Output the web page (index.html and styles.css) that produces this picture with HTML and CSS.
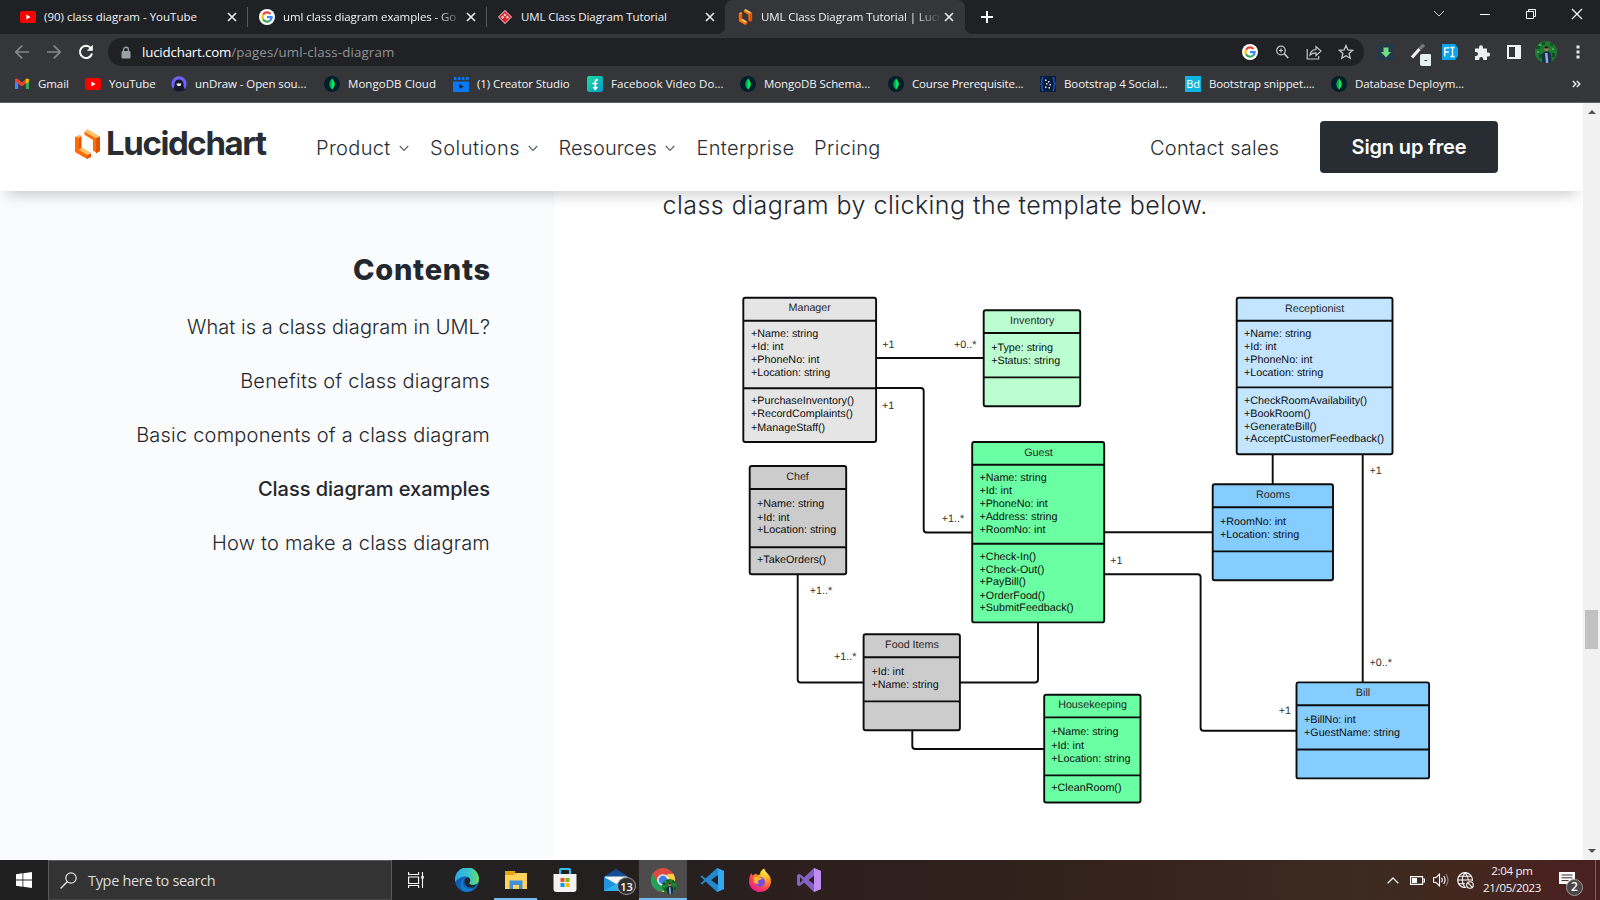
FILE: index.html
```html
<!DOCTYPE html>
<html lang="en">
<head>
<meta charset="utf-8">
<title>UML Class Diagram Tutorial | Lucidchart</title>
<link rel="stylesheet" href="styles.css">
</head>
<body>
<svg class="defs" width="0" height="0">
  <defs>
    <symbol id="x" viewBox="0 0 10 10"><path d="M1 1l8 8M9 1l-8 8" stroke="#e8eaed" stroke-width="1.7" fill="none"/></symbol>
    <symbol id="yt" viewBox="0 0 16 12"><rect width="16" height="12" rx="2.6" fill="#f00"/><path d="M6.3 3.6v4.8L10.6 6z" fill="#fff"/></symbol>
    <symbol id="google" viewBox="0 0 16 16"><circle cx="8" cy="8" r="8" fill="#fff"/><g fill="none" stroke-width="2.2"><path d="M4.1 5.6A4.6 4.6 0 0 1 11.4 4.9" stroke="#ea4335"/><path d="M4.1 5.6a4.6 4.6 0 0 0 0 4.8" stroke="#fbbc05"/><path d="M4.1 10.4a4.6 4.6 0 0 0 7 1.1" stroke="#34a853"/><path d="M11.1 11.5A4.4 4.4 0 0 0 12.6 8.2H8" stroke="#4285f4"/></g></symbol>
    <symbol id="mongo" viewBox="0 0 16 16"><circle cx="8" cy="8" r="8" fill="#021e2b"/><path d="M8 2.400c3.600 3.800 3.400 8 0 11-3.400-3-3.600-7.200 0-11z" fill="#10aa50"/><path d="M8 2.400c3.600 3.800 3.400 8 0 11z" fill="#00ed64"/></symbol>
    <symbol id="lucid" viewBox="0 0 25 30"><path d="M0 8l5.500-1.600v15L0 23z" fill="#ff6d00"/><path d="M4 8.500L6.500 7v13L4 21.500z" fill="#e65100"/><path d="M0 8l4-2 2.500 1L4 9z" fill="#ffb14d"/><path d="M0 23l4.500-3L15.500 26.500 12 30z" fill="#ff6d00"/><path d="M3.500 20.500L7 18.400l9 5.400-3.500 2.400z" fill="#ffc26b"/><path d="M12 30v-3.500l4-2.300V28z" fill="#e65100"/><path d="M9.500 2.500l3-2.500L25 7.500 20.500 9z" fill="#ffc26b"/><path d="M9.500 2.500L20.500 9v3.500L9.500 5.800z" fill="#ff6d00"/><path d="M18 10l3-1.500v15L18 21.500z" fill="#ff6d00"/><path d="M21 9l4-1.500V22l-4 2.500z" fill="#e65100"/></symbol>
    <symbol id="chev" viewBox="0 0 10 7"><path d="M.8 1L5 5.400 9.200 1" stroke="#5a636d" stroke-width="1.200" fill="none"/></symbol>
    <symbol id="face" viewBox="0 0 22 24"><clipPath id="fc"><circle cx="11" cy="12" r="11"/></clipPath><g clip-path="url(#fc)"><rect width="22" height="24" fill="#1d7a30"/><path d="M1 6h4v3H1zM15 3h3v3h-3zM4 14h3v4H4zM17 13h3v4h-3zM7 2h3v3H7z" fill="#0e5220"/><path d="M4 4h2v2H4zM17 8h2v2h-2zM2 11h2v2H2z" fill="#3da64a"/><circle cx="11.500" cy="9" r="2.300" fill="#a9785c"/><path d="M9.300 7.600q2.200-2.500 4.400 0l-.5.8h-3.400z" fill="#221a18"/><path d="M7 14l3-2.500h4l2 2.500.5 10h-9z" fill="#1b2a4a"/><path d="M10 13h2.500l1 11h-2.500z" fill="#8fb0dc"/></g></symbol>
  </defs>
</svg>

<div class="screen">
  <header class="browser">
    <div class="tabs">
      <div class="tab"><svg class="fav16x12"><use href="#yt"/></svg><span class="t1">(90) class diagram - YouTube</span><svg class="close"><use href="#x"/></svg></div>
      <div class="tab sep"><svg class="i16"><use href="#google"/></svg><span class="fade">uml class diagram examples - Go</span><svg class="close"><use href="#x"/></svg></div>
      <div class="tab sep"><svg class="i14" viewBox="0 0 14 14"><path d="M7 0l7 7-7 7-7-7z" fill="#f4dcdc"/><path d="M7 .9L13.100 7 7 13.100.9 7z" fill="#d8232a"/><path d="M7 3.200l1.700 1.700L7 6.600 5.300 4.900zM4.600 5.600l1.700 1.700-1.700 1.700-1.700-1.700zM9.400 5.600l1.700 1.700L9.400 9 7.700 7.300z" fill="#fff" opacity=".75"/></svg><span class="t3">UML Class Diagram Tutorial</span><svg class="close"><use href="#x"/></svg></div>
      <div class="tab active"><svg class="luc"><use href="#lucid"/></svg><span class="fade">UML Class Diagram Tutorial | Luci</span><svg class="close"><use href="#x"/></svg></div>
      <svg class="plus" viewBox="0 0 12 12"><path d="M6 0v12M0 6h12" stroke="#fff" stroke-width="2"/></svg>
      <div class="win">
        <svg viewBox="0 0 12 12"><path d="M1 3l5 5 5-5" stroke="#c8cacd" fill="none"/></svg>
        <svg viewBox="0 0 12 12"><path d="M1 6.500h10" stroke="#fff" fill="none"/></svg>
        <svg viewBox="0 0 12 12"><path d="M1.500 3.500h7v7h-7zM3.500 3.500v-2h7v7h-2" stroke="#fff" fill="none"/></svg>
        <svg viewBox="0 0 12 12"><path d="M1 1l10 10M11 1L1 11" stroke="#fff" stroke-width="1.200" fill="none"/></svg>
      </div>
    </div>
    <div class="toolbar">
      <div class="navbtns">
        <svg viewBox="0 0 16 16"><path d="M15 8H2M8.200 1.600L1.800 8l6.400 6.400" stroke="#85878a" stroke-width="1.700" fill="none"/></svg>
        <svg viewBox="0 0 16 16"><path d="M1 8h13M7.800 1.600L14.200 8l-6.400 6.400" stroke="#85878a" stroke-width="1.700" fill="none"/></svg>
        <svg viewBox="0 0 16 16"><path d="M12.800 4.100A6.100 6.100 0 1 0 14 9.400" stroke="#fff" stroke-width="2" fill="none"/><path d="M14.800.8v6H8.800z" fill="#fff"/></svg>
      </div>
      <div class="omni">
        <svg class="lock" viewBox="0 0 10 13"><rect x=".5" y="5" width="9" height="7.500" rx="1" fill="#9aa0a6"/><path d="M2.600 5.500V3.600a2.400 2.400 0 0 1 4.800 0v1.900" stroke="#9aa0a6" stroke-width="1.400" fill="none"/></svg>
        <span class="host">lucidchart.com</span><span class="path">/pages/uml-class-diagram</span>
        <div class="oicons">
          <svg viewBox="0 0 16 16"><use href="#google"/></svg>
          <svg viewBox="0 0 16 16" fill="none" stroke="#c4c7ca" stroke-width="1.200"><circle cx="7" cy="6.500" r="4.300"/><path d="M10.200 9.700l4 4.300" stroke-width="1.700"/><path d="M5 6.500h4M7 4.500v4"/></svg>
          <svg viewBox="0 0 16 16" fill="none" stroke="#c4c7ca" stroke-width="1.200"><path d="M1.200 5v10h11.500v-3"/><path d="M4 11c.4-3.600 2.400-5.300 6-5.500V2.500l5 4.600-5 4.500V8.800C7.500 8.800 5.600 9.400 4 11z"/></svg>
          <svg viewBox="0 0 16 16" fill="none" stroke="#c4c7ca" stroke-width="1.300"><path d="M8 1.500l1.900 4.400 4.800.4-3.600 3.200 1.100 4.700L8 11.700l-4.200 2.500 1.100-4.700-3.600-3.200 4.800-.4z"/></svg>
        </div>
      </div>
      <div class="ext">
        <svg class="e1" viewBox="0 0 16 16"><rect width="16" height="16" rx="1" fill="#22394a"/><path d="M5.500 3.500h5V8H13l-5 5.500L3 8h2.500z" fill="#6fdc7d"/></svg>
        <svg class="e2" viewBox="0 0 20 22"><path d="M1 13.500L8.500 5" stroke="#f1f1f1" stroke-width="3"/><path d="M8.500 5L13 .8" stroke="#777" stroke-width="3.500"/><rect x="9" y="10" width="11.500" height="12" rx="2" fill="#e4f0f2"/><path d="M13.500 16.500h2.500" stroke="#333"/></svg>
        <svg class="e3" viewBox="0 0 16 16"><path d="M0 0h13l3 4v8l-3 4H0z" fill="#0aa5ea"/><path d="M2.800 12.500V3.800h4.700M2.800 8h4M8.500 3.500h4M8.500 12.500h4M10.500 3.500v9" stroke="#fff" stroke-width="1.300" fill="none"/></svg>
        <svg class="e4" viewBox="0 0 16 16"><path d="M1 4.500h4V3.300a2 2 0 0 1 4 0v1.200h4v4h1.100a2 2 0 0 1 0 4H13V16H9.200v-1a2 2 0 0 0-4 0v1H1v-4h1a2 2 0 0 0 0-4H1z" fill="#eceef0"/></svg>
        <svg class="e5" viewBox="0 0 14 14"><path d="M0 0h14v14H0zM2 2v10h6V2z" fill="#f1f3f4" fill-rule="evenodd"/></svg>
        <svg class="e6"><use href="#face"/></svg>
        <svg class="e7" viewBox="0 0 4 14" fill="#e8eaed"><rect width="3" height="3" x=".5" y=".5"/><rect width="3" height="3" x=".5" y="5.500"/><rect width="3" height="3" x=".5" y="10.500"/></svg>
      </div>
    </div>
    <div class="marks">
      <a><svg class="i16" viewBox="0 0 16 16"><path d="M1 3h3.200v10H1z" fill="#4285f4"/><path d="M11.800 3H15v10h-3.200z" fill="#34a853"/><path d="M1 3.300l2-.8L8 6.500l4.500-4v4.300L8 10.600 1 5.200z" fill="#ea4335"/><path d="M11.800 3l1.700-.6L15 3.500v2l-3.200 2.300z" fill="#fbbc04"/></svg><span>Gmail</span></a>
      <a><svg class="fav16x12"><use href="#yt"/></svg><span>YouTube</span></a>
      <a><svg class="i16" viewBox="0 0 16 16"><circle cx="8" cy="7.800" r="7.600" fill="#6c63ff"/><path d="M3.500 8a4.500 4.500 0 0 1 9 0v2l1.500 4-6 2-6-2 1.500-4z" fill="#17172b"/><path d="M5.700 7.500h4.600a2.300 2.600 0 0 1-4.600 0z" fill="#fff"/></svg><span>unDraw - Open sou...</span></a>
      <a><svg class="i16"><use href="#mongo"/></svg><span class="w0">MongoDB Cloud</span></a>
      <a><svg class="i16" viewBox="0 0 16 16"><path d="M0 5.500h16V15a1 1 0 0 1-1 1H1a1 1 0 0 1-1-1z" fill="#0a78f2"/><path d="M1 1h2.500v3H1zM5 1h2.500v3H5zM9 1h2.500v3H9zM13 1h2.500v3H13z" fill="#0a78f2"/><path d="M6.300 8v5l4.400-2.500z" fill="#16233a"/></svg><span>(1) Creator Studio</span></a>
      <a><svg class="i16" viewBox="0 0 16 16"><linearGradient id="fg" x2="1" y2="1"><stop stop-color="#14e0a0"/><stop offset="1" stop-color="#0a96c8"/></linearGradient><rect width="16" height="16" rx="2" fill="url(#fg)"/><path d="M11 3.800H9.800Q8.300 3.800 8.300 5.400V13M5.300 7.500h5.200M6.300 11l2 2.200 2-2.200" stroke="#fff" stroke-width="1.700" fill="none"/></svg><span class="w0">Facebook Video Do...</span></a>
      <a><svg class="i16"><use href="#mongo"/></svg><span>MongoDB Schema...</span></a>
      <a><svg class="i16"><use href="#mongo"/></svg><span class="w2">Course Prerequisite...</span></a>
      <a><svg class="i16" viewBox="0 0 16 16"><rect width="16" height="16" fill="#0b1d3a"/><path d="M3.500 1.500Q1.800 1.500 2 4v2.500L.8 8 2 9.500V12q-.2 2.500 1.500 2.500M12.500 1.500Q14.200 1.500 14 4v2.500L15.200 8 14 9.500V12q.2 2.500-1.500 2.500" stroke="#1d62d8" stroke-width="1.200" fill="none"/><path d="M5 3.500h1.500V5H5zM8 5h1.500v1.500H8zM6 7h1.500v1.500H6zM9.500 8H11v1.500H9.500zM5 10.500h1.500V12H5zM8.500 11H10v1.500H8.500z" fill="#dbe8ff"/></svg><span>Bootstrap 4 Social...</span></a>
      <a><i class="bd">Bd</i><span class="w1">Bootstrap snippet....</span></a>
      <a><svg class="i16"><use href="#mongo"/></svg><span>Database Deploym...</span></a>
      <svg class="more" viewBox="0 0 9 8"><path d="M.8 1l3 3-3 3M4.800 1l3 3-3 3" stroke="#e8eaed" stroke-width="1.500" fill="none"/></svg>
    </div>
  </header>

  <div class="viewport">
    <div class="page">
      <nav class="site">
        <a class="logo"><svg class="mark"><use href="#lucid"/></svg><span>Lucidchart</span></a>
        <div class="links">
          <a class="n1">Product<svg><use href="#chev"/></svg></a>
          <a class="n2">Solutions<svg><use href="#chev"/></svg></a>
          <a class="n3">Resources<svg><use href="#chev"/></svg></a>
          <a class="n4">Enterprise</a>
          <a class="n5">Pricing</a>
        </div>
        <a class="contact">Contact sales</a>
        <a class="cta">Sign up free</a>
      </nav>
      <div class="body">
        <aside>
          <h2>Contents</h2>
          <a class="c1">What is a class diagram in UML?</a>
          <a>Benefits of class diagrams</a>
          <a>Basic components of a class diagram</a>
          <a class="on">Class diagram examples</a>
          <a>How to make a class diagram</a>
        </aside>
        <article>
          <p>class diagram by clicking the template below.</p>
          <svg class="uml" viewBox="554 220 1029 640">
            <g class="wire">
              <path d="M876 358H984"/>
              <path d="M876 388H920.700Q923.700 388 923.700 391V529.500Q923.700 532.500 926.700 532.500H972"/>
              <path d="M797.700 574V679.500Q797.700 682.500 800.700 682.500H864"/>
              <path d="M960 682.500H1035Q1038 682.500 1038 679.500V622"/>
              <path d="M912.300 730V746Q912.300 749 915.300 749H1044"/>
              <path d="M1104 532.300H1213"/>
              <path d="M1104 574.300H1197.600Q1200.600 574.300 1200.600 577.300V727.700Q1200.600 730.700 1203.600 730.700H1297"/>
              <path d="M1272.700 454V484"/>
              <path d="M1362.700 454V682"/>
            </g>
            <g class="box" fill="#e5e5e5"><rect x="743.300" y="297.700" width="132.800" height="144.300" rx="2"/><path d="M743 320.700h133M743 388.300h133"/></g>
            <g class="box" fill="#bbffd0"><rect x="983.700" y="310.300" width="96.500" height="96" rx="2"/><path d="M984 333h96M984 377.400h96"/></g>
            <g class="box" fill="#6bffa3"><rect x="972.200" y="442" width="132" height="180.400" rx="2"/><path d="M972 464.700h132M972 543.700h132"/></g>
            <g class="box" fill="#cccccc"><rect x="749.700" y="466" width="96.500" height="108.300" rx="2"/><path d="M750 489h96M750 547.300h96"/></g>
            <g class="box" fill="#cccccc"><rect x="863.600" y="634.200" width="96.300" height="96" rx="2"/><path d="M864 657.200h96M864 701.400h96"/></g>
            <g class="box" fill="#6bffa3"><rect x="1044.200" y="694.700" width="96.300" height="107.800" rx="2"/><path d="M1044 717.400h96M1044 775.400h96"/></g>
            <g class="box" fill="#c3e5ff"><rect x="1236.700" y="297.700" width="155.800" height="156.500" rx="2"/><path d="M1237 320.700h156M1237 387.400h156"/></g>
            <g class="box" fill="#86cdff"><rect x="1212.700" y="484.200" width="120.300" height="96" rx="2"/><path d="M1213 507.200h120M1213 551.400h120"/></g>
            <g class="box" fill="#86cdff"><rect x="1296.500" y="682.400" width="132.600" height="96" rx="2"/><path d="M1297 705.200h132M1297 749.500h132"/></g>
            <g class="ttl">
              <text x="809.700" y="311">Manager</text><text x="1032.200" y="323.700">Inventory</text><text x="1038.500" y="456">Guest</text>
              <text x="797.500" y="479.800">Chef</text><text x="912" y="648">Food Items</text><text x="1092.500" y="707.800">Housekeeping</text>
              <text x="1314.600" y="311.500">Receptionist</text><text x="1273" y="498">Rooms</text><text x="1363" y="696">Bill</text>
            </g>
            <g class="txt">
              <text><tspan x="751" y="337.400">+Name: string</tspan><tspan x="751" y="350.400">+Id: int</tspan><tspan x="751" y="363.400">+PhoneNo: int</tspan><tspan x="751" y="376.400">+Location: string</tspan><tspan x="751" y="404.200">+PurchaseInventory()</tspan><tspan x="751" y="417.400">+RecordComplaints()</tspan><tspan x="751" y="430.500">+ManageStaff()</tspan></text>
              <text><tspan x="991.200" y="350.600">+Type: string</tspan><tspan x="991.200" y="363.600">+Status: string</tspan></text>
              <text><tspan x="979.400" y="480.800">+Name: string</tspan><tspan x="979.400" y="493.600">+Id: int</tspan><tspan x="979.400" y="506.500">+PhoneNo: int</tspan><tspan x="979.400" y="520">+Address: string</tspan><tspan x="979.400" y="533">+RoomNo: int</tspan><tspan x="979.600" y="559.800">+Check-In()</tspan><tspan x="979.600" y="572.500">+Check-Out()</tspan><tspan x="979.600" y="585.400">+PayBill()</tspan><tspan x="979.600" y="598.600">+OrderFood()</tspan><tspan x="979.600" y="611.400">+SubmitFeedback()</tspan></text>
              <text><tspan x="757" y="507.100">+Name: string</tspan><tspan x="757" y="520.500">+Id: int</tspan><tspan x="757" y="533.400">+Location: string</tspan><tspan x="757" y="563.400">+TakeOrders()</tspan></text>
              <text><tspan x="871.400" y="674.500">+Id: int</tspan><tspan x="871.400" y="687.800">+Name: string</tspan></text>
              <text><tspan x="1051.300" y="735.300">+Name: string</tspan><tspan x="1051.300" y="748.800">+Id: int</tspan><tspan x="1051.300" y="761.800">+Location: string</tspan><tspan x="1051.300" y="791.300">+CleanRoom()</tspan></text>
              <text><tspan x="1244" y="337.200">+Name: string</tspan><tspan x="1244" y="349.800">+Id: int</tspan><tspan x="1244" y="362.800">+PhoneNo: int</tspan><tspan x="1244" y="375.700">+Location: string</tspan><tspan x="1244" y="404">+CheckRoomAvailability()</tspan><tspan x="1244" y="416.800">+BookRoom()</tspan><tspan x="1244" y="429.600">+GenerateBill()</tspan><tspan x="1244" y="442.400">+AcceptCustomerFeedback()</tspan></text>
              <text><tspan x="1220" y="525.400">+RoomNo: int</tspan><tspan x="1220" y="538.400">+Location: string</tspan></text>
              <text><tspan x="1304" y="722.800">+BillNo: int</tspan><tspan x="1304" y="736">+GuestName: string</tspan></text>
            </g>
            <g class="lbl">
              <text x="882.300" y="348.400">+1</text><text x="954" y="348.400">+0..*</text><text x="882" y="408.800">+1</text><text x="941.800" y="522">+1..*</text>
              <text x="809.800" y="594.200">+1..*</text><text x="834" y="660.400">+1..*</text><text x="1110.200" y="564.400">+1</text><text x="1369.500" y="474.200">+1</text>
              <text x="1369.500" y="666.200">+0..*</text><text x="1278.800" y="714.400">+1</text>
            </g>
          </svg>
        </article>
      </div>
    </div>
    <div class="scroll">
      <svg viewBox="0 0 8 4"><path d="M0 4l4-4 4 4z" fill="#505050"/></svg>
      <div class="thumb"></div>
      <svg viewBox="0 0 8 4"><path d="M0 0l4 4 4-4z" fill="#505050"/></svg>
    </div>
  </div>

  <footer class="taskbar">
    <div class="start"><svg viewBox="0 0 16 16"><path d="M0 2.200l6.500-.9v6.300H0zM7.300 1.200L16 0v7.600H7.300zM0 8.400h6.500v6.300L0 13.800zM7.300 8.400H16V16l-8.700-1.200z" fill="#fff"/></svg></div>
    <div class="search"><svg viewBox="0 0 17 17"><circle cx="11" cy="6" r="5.200" stroke="#e6e6e6" stroke-width="1.200" fill="none"/><path d="M7.200 9.800L.6 16.400" stroke="#e6e6e6" stroke-width="1.400"/></svg><span>Type here to search</span></div>
    <div class="apps">
      <div><svg class="tv" viewBox="0 0 16 16" fill="none" stroke="#fff" stroke-width="1.100"><path d="M.6 0v2.500h10V0M.6 16v-2.500h10V16M.6 5h10v6.500H.6zM14.500 0v16"/><path d="M13.300 4h2.400v2.600h-2.400z" fill="#fff" stroke="none"/></svg></div>
      <div><svg class="i24" viewBox="0 0 24 24"><linearGradient id="eg"><stop stop-color="#2aa8e8"/><stop offset=".6" stop-color="#38c6c8"/><stop offset="1" stop-color="#6ddc5a"/></linearGradient><circle cx="12" cy="12" r="12" fill="#0d5fb4"/><path d="M0 11.500A12 12 0 0 1 24 11c.3 4-3 6-6.500 6-3 0-4-1.500-3-2.600 1.800-2 .4-6-4-6-4.500 0-8.500 2.500-10.500 5.600z" fill="url(#eg)"/><path d="M8 14.500c0 5 4.500 8.300 12 5.200a12 12 0 0 1-10 4C4 22 4 12.500 10.500 10c-1.500 1-2.500 2.500-2.500 4.500z" fill="#1479cf"/><path d="M9.500 14a4 4 0 0 1 3.500-4.500c2.500 1 3 3.200 1.500 4.900-1 1.100 0 2.600 3 2.600 1.500 0 3-.3 4-1-1.500 3-4 4-6.500 3.500-3-.5-5.300-2.700-5.500-5.500z" fill="#232323"/></svg></div>
      <div class="open"><svg class="i24" viewBox="0 0 24 24"><path d="M1 5h22v16H1z" fill="#ffd35b"/><path d="M1 3h10v2.500l-1 1.500H1z" fill="#e8a317"/><path d="M5.500 21v-8.500h13V21H15v-4H9v4z" fill="#3f8fdb"/></svg></div>
      <div><svg class="i24" viewBox="0 0 24 24"><path d="M7 7V2.500A1.500 1.500 0 0 1 8.500 1h7A1.500 1.500 0 0 1 17 2.500V7" stroke="#38bdf2" stroke-width="2.200" fill="none"/><path d="M.5 6h23v15a3 3 0 0 1-3 3h-17a3 3 0 0 1-3-3z" fill="#f3f3f3"/><path d="M7.500 10h4v4h-4z" fill="#f25022"/><path d="M12.500 10h4v4h-4z" fill="#7fba00"/><path d="M7.500 15h4v4h-4z" fill="#0f9be8"/><path d="M12.500 15h4v4h-4z" fill="#ffb900"/></svg></div>
      <div class="mail"><svg class="i24" viewBox="0 0 24 24"><path d="M0 8.500L12 1l12 7.500V23H0z" fill="#0f4d96"/><path d="M1 8.500h22v3L12 17 1 11.500z" fill="#f5f5f5"/><path d="M0 9l12 7 12-7v14H0z" fill="#2bb0f5"/><path d="M0 9l12 7L0 23z" fill="#1f93dc"/></svg><b class="badge">13</b></div>
      <div class="open cur"><svg class="i24" viewBox="0 0 24 24"><circle cx="12" cy="12" r="12" fill="#dd4b3e"/><path d="M1.600 6A12 12 0 0 0 11 24l5-9-9-1z" fill="#24a159"/><path d="M22.400 6A12 12 0 0 1 11 24l6-10-1-8z" fill="#ffcd40"/><circle cx="12" cy="12" r="5.800" fill="#fff"/><circle cx="12" cy="12" r="4.400" fill="#3f7de8"/></svg><svg class="mini"><use href="#face" width="15" height="17"/></svg></div>
      <div><svg class="i24" viewBox="0 0 24 24"><path d="M17 0l7 3v18l-7 3L5.500 13.500 2 16.500.5 15.500 4.200 12 .5 8.500 2 7.500l3.500 3zM18 7l-7 5 7 5z" fill="#1f8ad2" fill-rule="evenodd"/><path d="M17 0l7 3v18l-7 3 1-1.500v-21z" fill="#33a9f0"/></svg></div>
      <div><svg class="i24" viewBox="0 0 24 24"><radialGradient id="ff" cx=".75" cy=".15" r=".95"><stop stop-color="#fff04f"/><stop offset=".4" stop-color="#ff9a1f"/><stop offset=".75" stop-color="#ff4057"/><stop offset="1" stop-color="#e3159a"/></radialGradient><path d="M3 5l1.500 2.500L8 5.500 9 7l3-.5Q12 2 16.500.5q0 3 3 5 3.500 3 3.500 8a11 10.500 0 0 1-22 0Q1 9 3 5z" fill="url(#ff)"/><circle cx="12" cy="14" r="5" fill="#7a4de0"/><path d="M6 9l6 .2 2.500 1.800-3.500 1q-2 1.500 0 3.500-3 1-5-1z" fill="#ffb52e"/></svg></div>
      <div><svg class="i24" viewBox="0 0 24 24"><path d="M17 0l7 3v18l-7 3L7 14.500l-4.500 3.700L0 17V7l2.500-1.200L7 9.500zM3 9v6l2.700-3zM17.500 7.500L11.500 12l6 4.500z" fill="#8661c5" fill-rule="evenodd"/><path d="M17 0l7 3v18l-7 3z" fill="#c08cf0"/></svg></div>
    </div>
    <div class="tray">
      <svg class="up" viewBox="0 0 12 7"><path d="M.7 6.300L6 1l5.300 5.300" stroke="#eee" stroke-width="1.300" fill="none"/></svg>
      <svg class="bat" viewBox="0 0 15 9"><path d="M.6.6h12v7.800H.6zM13 3h1.400v3H13" stroke="#fff" stroke-width="1.100" fill="none"/><path d="M2 2h5v5H2z" fill="#fff"/></svg>
      <svg class="vol" viewBox="0 0 16 14" fill="none" stroke="#fff" stroke-width="1.100"><path d="M.6 4.500h2.500L6.500 1.200v11.600L3.100 9.500H.6zM8.500 4.700q1.500 2.300 0 4.600M10.700 3q2.800 4 0 8"/><path d="M13 1.200q4 5.800 0 11.600" stroke="#958480"/></svg>
      <svg class="net" viewBox="0 0 17 17" fill="none" stroke="#fff" stroke-width="1.100"><path d="M9 15.400A7.400 7.400 0 1 1 15.400 9M1 8h14.500M2 4.300h12M2 11.700h6M8 .6Q2.500 8 8 15.400M8 .6q3.400 4 3.200 7.500"/><circle cx="13" cy="13" r="3.300"/><path d="M10.700 10.700l4.600 4.600"/></svg>
      <div class="clock"><span>2:04 pm</span><span>21/05/2023</span></div>
      <div class="note"><svg viewBox="0 0 16 15"><path d="M0 0h16v12h-6v3l-3-3H0z" fill="#fff"/><path d="M2.500 3h11M2.500 5.800h11M2.500 8.600h7" stroke="#43231f" stroke-width="1"/></svg><b class="badge">2</b></div>
      <i class="desk"></i>
    </div>
  </footer>
</div>
</body>
</html>
```
FILE: styles.css
```css
* { box-sizing: border-box; }
body { margin: 0; background: #fff; overflow: hidden; }
svg { display: block; flex: none; }
.defs { position: absolute; }
.screen { width: 1600px; height: 900px; display: flex; flex-direction: column; }

/* Browser chrome */
.browser { height: 103px; flex: none; background: #35363a; border-bottom: 1px solid #5f6064; color: #f1f3f4; font: 11.5px/16px "Open Sans", sans-serif; letter-spacing: -.09px; }
.tabs { height: 34px; background: #202124; display: flex; align-items: center; }
.tab { width: 239px; height: 34px; padding: 0 10px 0 12px; display: flex; align-items: center; position: relative; }
.tab:first-child { width: 247px; padding-left: 20px; }
.tab.sep::before { content: ""; position: absolute; left: 0; top: 7px; width: 1px; height: 20px; background: #56585c; }
.tab span { flex: 1; margin: 0 2px 0 8px; white-space: nowrap; }
.tab .t3 { margin-left: 9px; }
.tab .fade { -webkit-mask-image: linear-gradient(90deg, #000 155px, transparent 180px); mask-image: linear-gradient(90deg, #000 155px, transparent 180px); }
.tab.active { background: #35363a; border-radius: 8px 8px 0 0; padding: 0 11px 0 13px; width: 240px; }
.tab.active::before, .tab.active::after { content: ""; position: absolute; bottom: 0; width: 8px; height: 8px; }
.tab.active::before { left: -8px; background: radial-gradient(circle at 0 0, transparent 8px, #35363a 8.500px); }
.tab.active::after { right: -8px; background: radial-gradient(circle at 100% 0, transparent 8px, #35363a 8.500px); }
.tab .t1 { letter-spacing: 0; }
.fav16x12 { width: 16px; height: 12px; }
.i16 { width: 16px; height: 16px; }
.i14 { width: 14px; height: 14px; }
.luc { width: 15px; height: 16px; }
.close { width: 10px; height: 10px; }
.plus { width: 12px; height: 12px; margin-left: 16px; }
.win { margin-left: auto; display: flex; gap: 34px; padding: 0 17px 6px 0; }
.win svg { width: 12px; height: 12px; }

.toolbar { height: 32px; margin: 2px 0; display: flex; align-items: center; }
.navbtns { display: flex; gap: 16px; padding-left: 14px; }
.navbtns svg { width: 16px; height: 16px; }
.omni { width: 1256px; height: 28px; margin-left: 14px; padding: 0 10px 0 13px; border-radius: 14px; background: #202124; display: flex; align-items: center; font-size: 13.300px; line-height: 20px; }
.lock { width: 10px; height: 13px; margin-right: 11px; }
.host { color: #fff; letter-spacing: -.18px; }
.path { color: #8f9297; letter-spacing: .15px; }
.oicons { margin-left: auto; display: flex; gap: 16px; }
.oicons svg { width: 16px; height: 16px; }
.ext { flex: 1; display: grid; grid-template-columns: 33px 31px 32px 32px 27px 43px 4px; align-items: center; padding-left: 14px; }
.e1, .e3, .e4 { width: 16px; height: 16px; }
.e2 { width: 20px; height: 22px; margin-top: 6px; }
.e5 { width: 14px; height: 14px; margin-left: 1px; }
.e6 { width: 22px; height: 24px; margin-left: 2px; }
.e7 { width: 4px; height: 14px; }

.marks { height: 32px; padding: 0 0 4px 14px; display: grid; grid-template-columns: 71px 86px 153px 129px 134px 153px 148px 152px 145px 146px 241px 10px; align-items: center; }
.marks a { display: flex; align-items: center; gap: 8px; white-space: nowrap; }
.marks .w0 { letter-spacing: .05px; }
.marks .w1 { letter-spacing: -.13px; }
.marks .w2 { letter-spacing: -.17px; }
.bd { width: 16px; height: 16px; background: #0bb7dd; color: #fff; font: 11px/16px "Open Sans", sans-serif; text-align: center; }
.more { width: 9px; height: 8px; }

/* Page */
.viewport { height: 757px; display: flex; }
.page { width: 1583px; display: flex; flex-direction: column; overflow: hidden; color: #23272e; font-family: Inter, sans-serif; }
.site { height: 88px; flex: none; position: relative; background: #fff; display: flex; align-items: center; padding-left: 75px; font-size: 20px; line-height: 24px; font-weight: 300; color: #282e36; box-shadow: 0 10px 14px -7px rgba(0, 0, 0, .22); white-space: nowrap; }
.logo { display: flex; align-items: center; gap: 6px; width: 241px; padding-bottom: 7px; }
.mark { width: 25px; height: 30px; margin-bottom: 0; }
.logo span { font-size: 33px; line-height: 34px; font-weight: 700; letter-spacing: -1.400px; color: #282c33; margin-bottom: 1px; }
.links { display: grid; grid-template-columns: 114px 128.500px 138px 117.500px 336px; letter-spacing: .35px; }
.links a { display: flex; align-items: center; gap: 8px; padding-top: 2px; }
.links svg { width: 10px; height: 7px; }
.links .n2 { letter-spacing: .5px; }
.links .n3 { letter-spacing: .05px; }
.contact { width: 170px; padding-top: 2px; letter-spacing: .27px; }
.cta { width: 178px; height: 52px; border-radius: 4px; background: #282c33; color: #fff; font-weight: 600; line-height: 52px; text-align: center; letter-spacing: -.15px; }
.body { flex: 1; display: flex; }
aside { width: 554px; background: #fafbfd; padding: 61px 64px 0 0; display: flex; flex-direction: column; align-items: flex-end; font-size: 20px; font-weight: 300; }
aside h2 { margin: 0 -1px 22px 0; font-size: 29px; line-height: 36px; font-weight: 800; letter-spacing: .75px; }
aside a { height: 54px; line-height: 34px; letter-spacing: .21px; }
aside .c1 { letter-spacing: .06px; }
aside .on { font-weight: 500; letter-spacing: -.03px; }
article { flex: 1; display: flex; flex-direction: column; }
article p { margin: 0 0 0 108.500px; height: 29px; line-height: 29px; font-size: 25px; font-weight: 300; letter-spacing: .46px; white-space: nowrap; }
.uml { width: 1029px; height: 640px; font: 10.760px "Liberation Sans", Arial, sans-serif; text-rendering: geometricPrecision; }
.uml .wire { fill: none; stroke: #0c0c0c; stroke-width: 1.900; }
.uml .box { stroke: #0c0c0c; stroke-width: 1.900; }
.uml .ttl { text-anchor: middle; fill: #262626; }
.uml .txt { fill: #0d0d0d; }
.uml .ttl text, .uml .txt text, .uml .lbl text { stroke: none; }
.uml .lbl { fill: #333; }

.scroll { width: 17px; background: #f1f1f1; display: flex; flex-direction: column; align-items: center; padding: 7px 0; }
.scroll svg { width: 8px; height: 4px; }
.thumb { width: 13px; height: 39px; margin: 496px 0 auto; background: #c1c1c1; }

/* Taskbar */
.taskbar { height: 40px; display: flex; background: linear-gradient(90deg, #202020 0, #222 400px, #241f1e 640px, #2e1f1d 840px, #33231c 1100px, #3b2b20 1360px, #43271f 1460px, #4a2020 1600px); color: #f2f2f2; font-family: "Open Sans", sans-serif; }
.start { width: 48px; padding: 12px 16px; }
.start svg { width: 16px; height: 16px; }
.search { width: 344px; background: #333; border: 1px solid #5b5b5b; border-bottom-color: #444; display: flex; align-items: center; gap: 11px; padding-left: 11px; font-size: 14.500px; letter-spacing: -.32px; color: #dcdcdc; }
.search svg { width: 17px; height: 17px; }
.apps { display: grid; grid-template-columns: 48px 54px 43px 55px 47px 48px 49px 48px 49px; }
.apps div { position: relative; display: flex; align-items: center; justify-content: center; }
.i24 { width: 24px; height: 24px; }
.tv { width: 16px; height: 16px; }
.open { border-bottom: 2px solid #76b9ed; }
.open .i24 { margin-top: 2px; }
.apps .cur { background: #4d4b4b; }
.mini { position: absolute; left: 23px; top: 18px; width: 15px; height: 17px; }
.badge { position: absolute; display: flex; align-items: center; justify-content: center; border-radius: 50%; border: 1px solid #9a9a9a; background: #303030; color: #fff; font: 600 11px/1 "Open Sans", sans-serif; }
.mail .badge { width: 19px; height: 18px; left: 25px; top: 17px; }
.tray { margin-left: auto; display: flex; align-items: center; }
.up { width: 12px; height: 7px; margin-right: 11px; }
.bat { width: 15px; height: 9px; margin-right: 8px; }
.vol { width: 16px; height: 14px; margin-right: 8px; }
.net { width: 17px; height: 17px; margin-right: 9px; }
.clock { width: 58px; display: flex; flex-direction: column; align-items: center; font-size: 11.500px; line-height: 17.500px; letter-spacing: -.28px; white-space: nowrap; padding-bottom: 2px; }
.note { position: relative; margin-left: 18px; }
.note svg { width: 16px; height: 15px; margin-bottom: 2px; }
.note .badge { left: 7px; top: 7px; width: 17px; height: 17px; background: #4b4545; font-size: 12px; }
.desk { width: 1px; height: 40px; background: #7b605f; margin: 0 4px 0 20px; }
```
